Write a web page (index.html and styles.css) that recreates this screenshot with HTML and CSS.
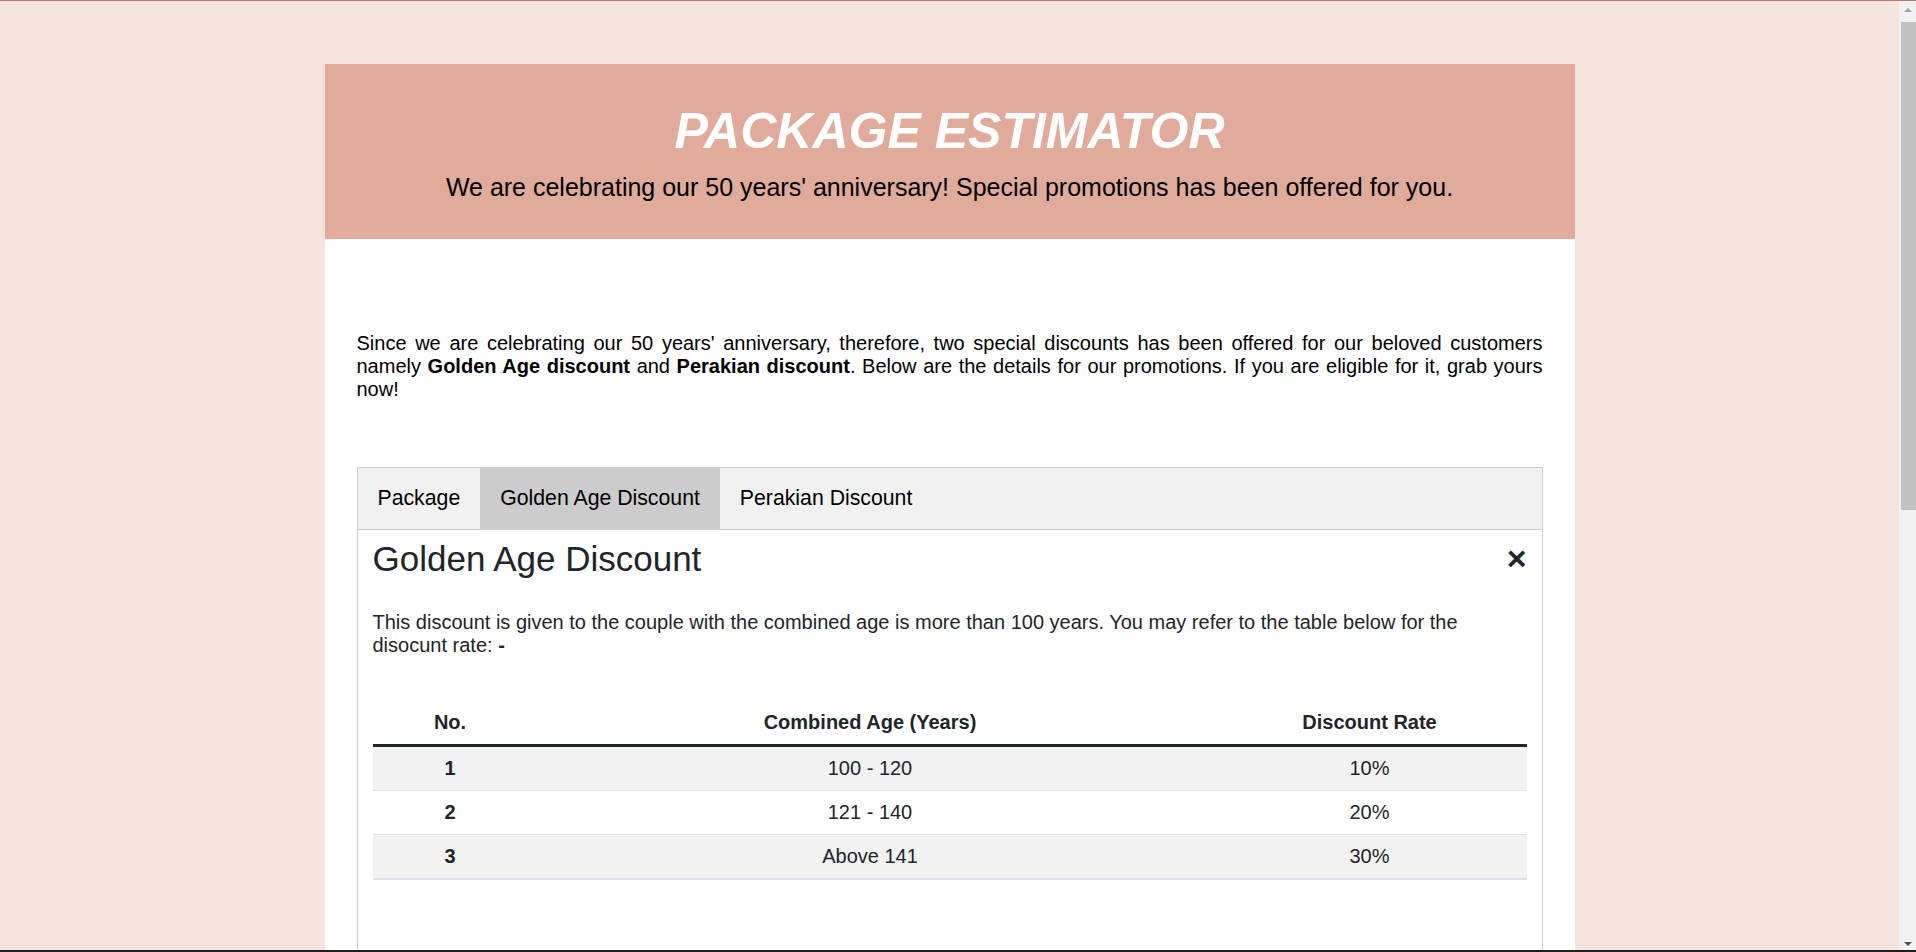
FILE: index.html
```html
<!DOCTYPE html>
<html lang="en">
<head>
<meta charset="utf-8">
<title>Package Estimator</title>
<link rel="stylesheet" href="styles.css">
</head>
<body>
<div class="page">
  <header class="banner">
    <h1 class="title">PACKAGE ESTIMATOR</h1>
    <p class="subtitle">We are celebrating our 50 years' anniversary! Special promotions has been offered for you.</p>
  </header>
  <main class="main">
    <p class="intro">Since we are celebrating our 50 years' anniversary, therefore, two special discounts has been offered for our beloved customers namely <b>Golden Age discount</b> and <b>Perakian discount</b>. Below are the details for our promotions. If you are eligible for it, grab yours now!</p>
    <div class="tabs">
      <div class="tab-bar">
        <button class="tab-btn">Package</button>
        <button class="tab-btn active">Golden Age Discount</button>
        <button class="tab-btn">Perakian Discount</button>
      </div>
      <div class="tab-content">
        <span class="close">&times;</span>
        <h3 class="tab-title">Golden Age Discount</h3>
        <p class="tab-text">This discount is given to the couple with the combined age is more than 100 years. You may refer to the table below for the disocunt rate: <b>-</b></p>
        <table class="rate-table">
          <colgroup>
            <col class="col-no">
            <col class="col-age">
            <col class="col-rate">
          </colgroup>
          <thead>
            <tr><th>No.</th><th>Combined Age (Years)</th><th>Discount Rate</th></tr>
          </thead>
          <tbody>
            <tr class="striped"><td class="num">1</td><td>100 - 120</td><td>10%</td></tr>
            <tr><td class="num">2</td><td>121 - 140</td><td>20%</td></tr>
            <tr class="striped"><td class="num">3</td><td>Above 141</td><td>30%</td></tr>
          </tbody>
        </table>
      </div>
    </div>
  </main>
</div>
<div class="scrollbar" aria-hidden="true">
  <div class="sb-btn sb-up"></div>
  <div class="sb-track"><div class="sb-thumb"></div></div>
  <div class="sb-btn sb-down"></div>
</div>
<div class="frame-bottom" aria-hidden="true"></div>
</body>
</html>
```
FILE: styles.css
```css
body {
  margin: 0;
  padding-right: 17px;
  background: #f7e3de;
  font-family: "Liberation Sans", Arial, sans-serif;
  color: #000;
  border-top: 1px solid #b87878;
}
.page {
  width: 1250px;
  margin: 63px auto 0;
  background: #fff;
}
.banner {
  background: #e0ab9a;
  text-align: center;
  padding: 39px 0 38px;
}
.title {
  margin: 0 0 14px;
  font-size: 50px;
  line-height: 56px;
  font-weight: bold;
  font-style: italic;
  color: #fff;
}
.subtitle {
  margin: 0;
  font-size: 25px;
  line-height: 28px;
  color: #000;
}
.main {
  padding: 93px 32px 0;
}
.intro {
  margin: 0 0 66px;
  font-size: 20px;
  line-height: 23px;
  text-align: justify;
}
.tab-bar {
  display: flex;
  border: 1px solid #ccc;
  background: #f1f1f1;
}
.tab-btn {
  border: none;
  outline: none;
  background: inherit;
  font-family: inherit;
  font-size: 21.25px;
  line-height: 25px;
  padding: 18px 20px;
  color: #000;
  cursor: pointer;
}
.tab-btn.active {
  background: #ccc;
}
.tab-content {
  border: 1px solid #ccc;
  border-top: none;
  padding: 7.5px 15px 120px;
  color: #212529;
}
.close {
  float: right;
  font-size: 34px;
  line-height: 40px;
  font-weight: bold;
  cursor: pointer;
  color: #212529;
}
.tab-title {
  margin: 0 0 31.5px;
  font-size: 35px;
  line-height: 42px;
  font-weight: normal;
}
.tab-text {
  margin: 0 0 44px;
  font-size: 20px;
  line-height: 23px;
}
.rate-table {
  width: 100%;
  border-collapse: collapse;
  font-size: 20px;
  line-height: 23px;
  border-bottom: 2px solid #dee2e6;
}
.col-no { width: 155px; }
.col-rate { width: 314px; }
.rate-table th {
  padding: 10px 12px;
  font-weight: bold;
  text-align: center;
  border-bottom: 3px solid #212529;
}
.rate-table td {
  padding: 10px 12px;
  text-align: center;
}
.rate-table tbody tr + tr td {
  border-top: 1px solid #dee2e6;
}
.rate-table .striped {
  background: #f2f2f2;
}
.rate-table .num {
  font-weight: bold;
}

/* window scrollbar (drawn, since the capture hides native scrollbars) */
.scrollbar {
  position: fixed;
  top: 1px;
  right: 0;
  bottom: 0;
  width: 17px;
  background: #f1f1f1;
  display: flex;
  flex-direction: column;
}
.sb-btn {
  height: 17px;
  flex: none;
  display: flex;
  align-items: center;
  justify-content: center;
}
.sb-up::before,
.sb-down::before {
  content: "";
  width: 0;
  height: 0;
  border-left: 4px solid transparent;
  border-right: 4px solid transparent;
}
.sb-up::before {
  border-bottom: 4px solid #a3a3a3;
}
.sb-down::before {
  border-top: 4px solid #505050;
}
.sb-track {
  flex: 1;
}
.sb-thumb {
  margin: 4px 0 0 2px;
  height: 488px;
  background: #c1c1c1;
}
.frame-bottom {
  position: fixed;
  left: 0;
  right: 0;
  bottom: 0;
  height: 2px;
  background: #1f1f1f;
}
```
